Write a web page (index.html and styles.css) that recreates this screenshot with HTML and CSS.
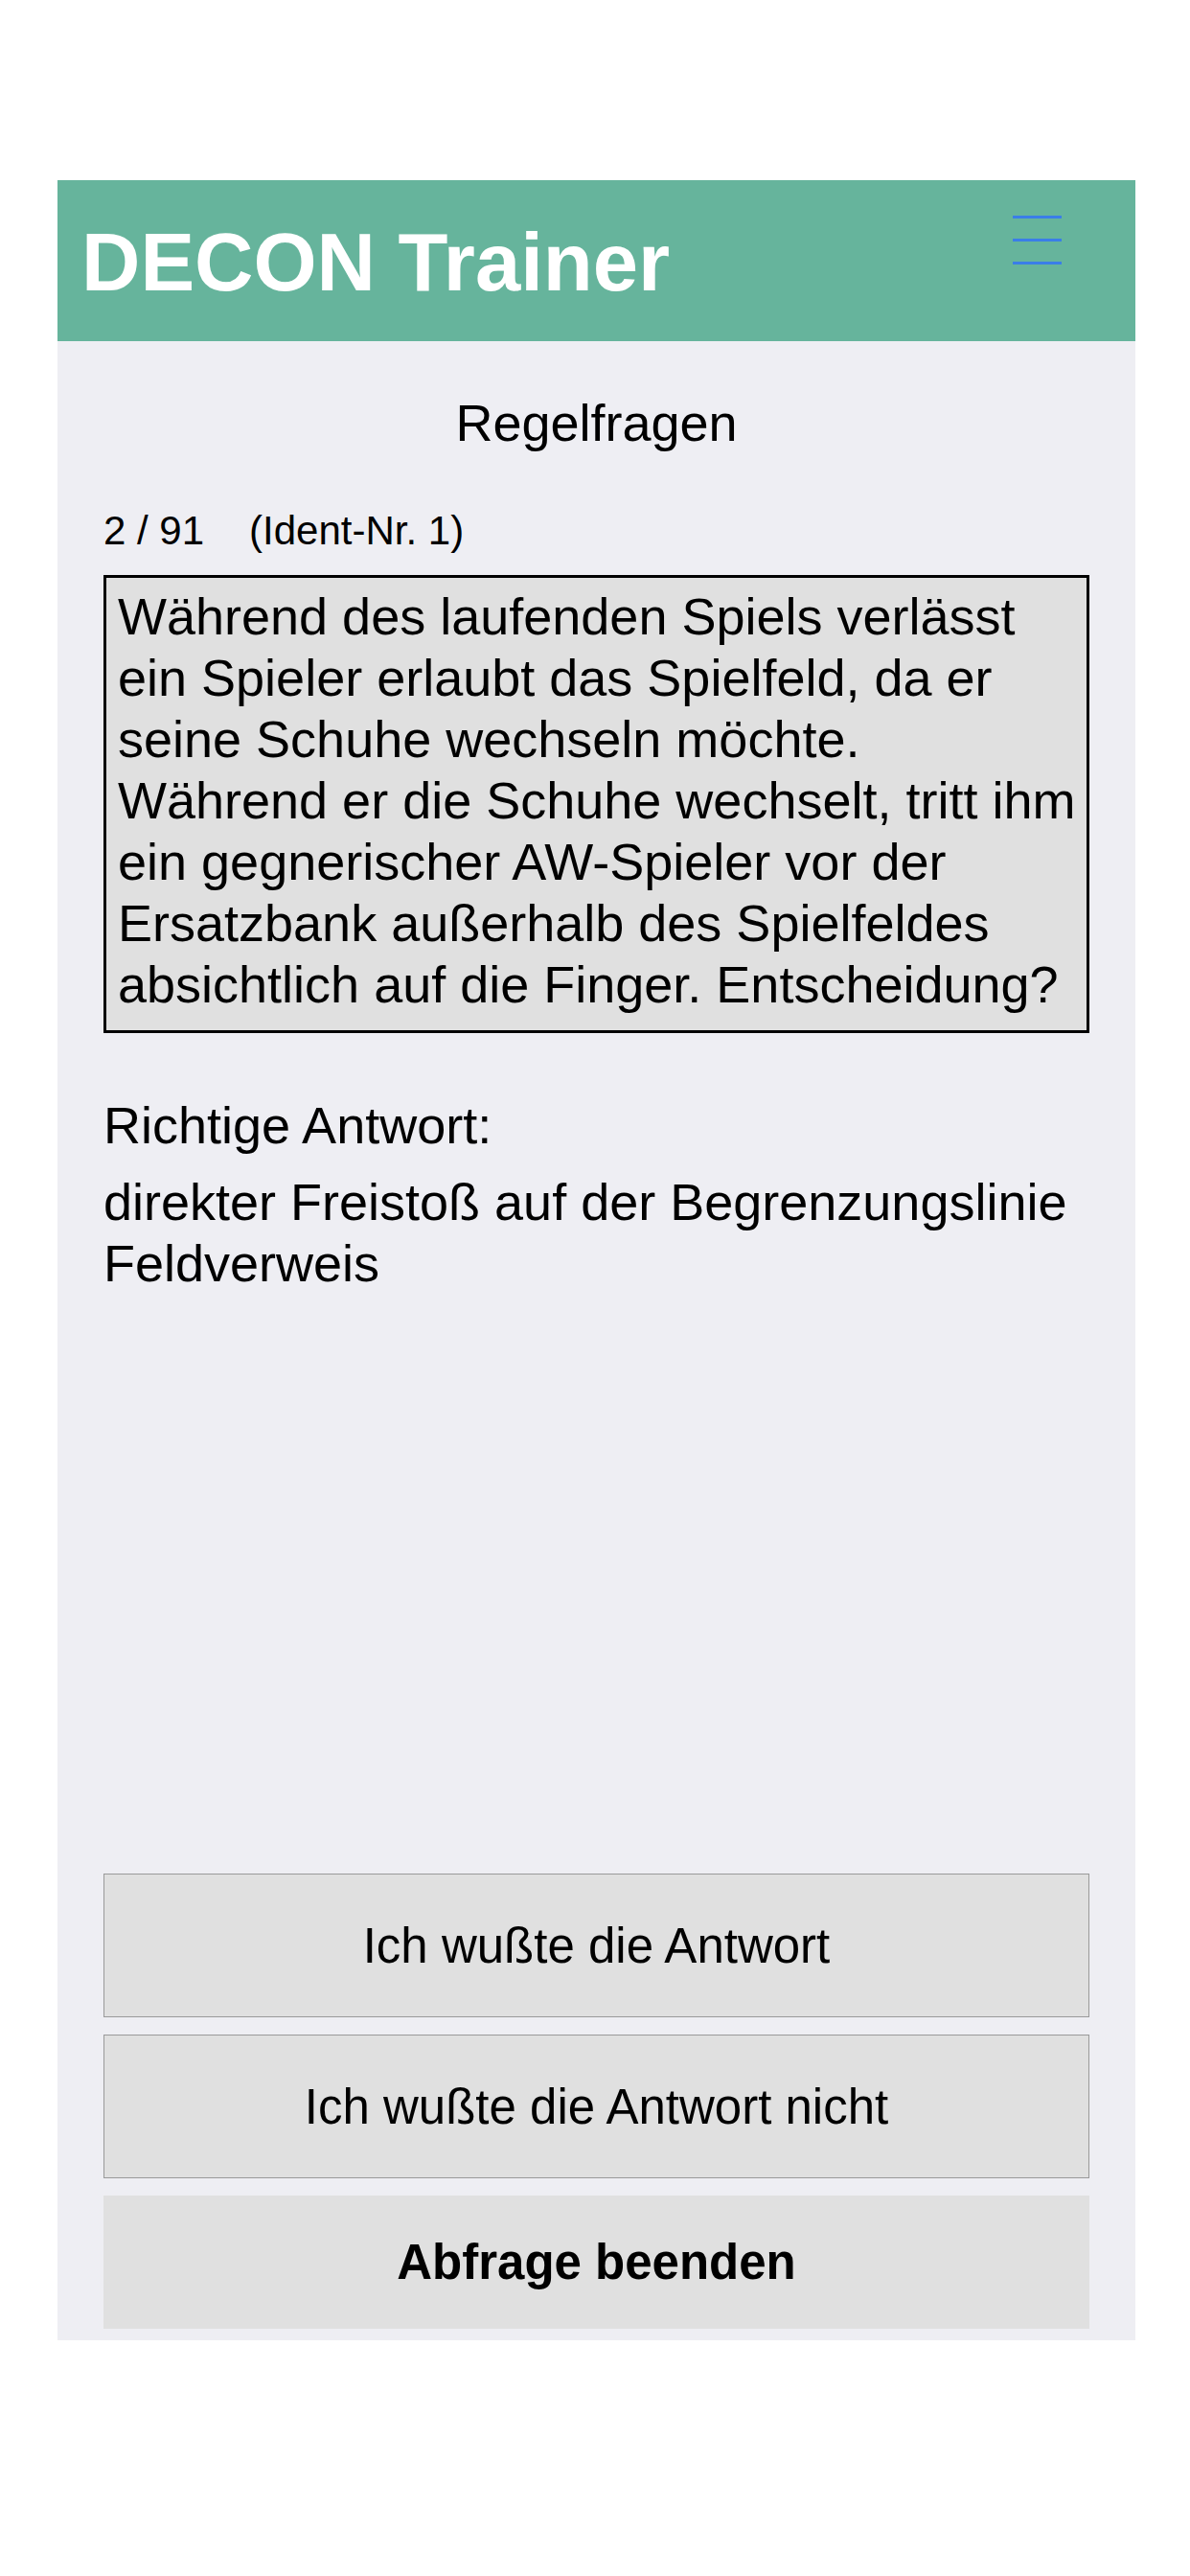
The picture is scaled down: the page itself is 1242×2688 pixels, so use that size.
FILE: index.html
```html
<!DOCTYPE html>
<html lang="de">
<head>
    <meta charset="UTF-8">
    <meta name="viewport" content="width=device-width, initial-scale=1.0">
    <title>DECON Trainer</title>
    <link rel="stylesheet" href="styles.css">
</head>
<body>

    <div class="app">
        <header class="topbar">
            <h1>DECON Trainer</h1>
            <button class="menu-btn" aria-label="Menü">
                <span></span>
                <span></span>
                <span></span>
            </button>
        </header>

        <main class="content">
            <h2 class="page-title">Regelfragen</h2>

            <div class="meta">
                <span id="counter">2 / 91</span>
                <span id="ident">(Ident-Nr. 1)</span>
            </div>

            <div class="question" id="question">Während des laufenden Spiels verlässt ein Spieler erlaubt das Spielfeld, da er seine Schuhe wechseln möchte. Während er die Schuhe wechselt, tritt ihm ein gegnerischer AW-Spieler vor der Ersatzbank außerhalb des Spielfeldes absichtlich auf die Finger. Entscheidung?</div>

            <div class="answer-label">Richtige Antwort:</div>
            <div class="answer" id="answer">
                direkter Freistoß auf der Begrenzungslinie<br>
                Feldverweis
            </div>

            <div class="actions">
                <button class="action-btn" id="known-btn">Ich wußte die Antwort</button>
                <button class="action-btn" id="unknown-btn">Ich wußte die Antwort nicht</button>
                <button class="action-btn end-btn" id="end-btn">Abfrage beenden</button>
            </div>
        </main>
    </div>

</body>
</html>
```

FILE: styles.css
```css
* {
    margin: 0;
    padding: 0;
    box-sizing: border-box;
    font-family: 'Liberation Sans', Arial, sans-serif;
}

body {
    background-color: #fff;
    color: #000;
}

.app {
    width: 1125px;
    margin: 188px 0 0 60px;
}

.topbar {
    height: 168px;
    background-color: #66b49c;
    display: flex;
    justify-content: space-between;
    align-items: flex-start;
    padding: 0 77px 0 25px;
}

.topbar h1 {
    margin-top: 38px;
    color: #fff;
    font-size: 85px;
    font-weight: 700;
    line-height: 96px;
}

.menu-btn {
    margin-top: 37px;
    width: 51px;
    display: flex;
    flex-direction: column;
    gap: 21px;
    background: none;
    border: none;
    cursor: pointer;
}

.menu-btn span {
    display: block;
    height: 3px;
    background-color: #3a7ee8;
}

.content {
    height: 2086px;
    background-color: #eeeef3;
    padding: 0 48px 12px;
    display: flex;
    flex-direction: column;
}

.page-title {
    margin-top: 53px;
    font-size: 54px;
    font-weight: 400;
    line-height: 64px;
    text-align: center;
}

.meta {
    margin-top: 56px;
    display: flex;
    gap: 47px;
    font-size: 42px;
    line-height: 50px;
}

.question {
    margin-top: 21px;
    background-color: #e0e0e0;
    border: 3px solid #000;
    padding: 8px 4px 16px 12px;
    font-size: 54px;
    line-height: 64px;
}

.answer-label {
    margin-top: 64px;
    font-size: 54px;
    line-height: 64px;
}

.answer {
    margin-top: 16px;
    font-size: 54px;
    line-height: 64px;
}

.actions {
    margin-top: auto;
    display: flex;
    flex-direction: column;
    gap: 18px;
}

.action-btn {
    height: 150px;
    background-color: #e0e0e0;
    border: 1px solid #9a9a9a;
    color: #000;
    font-size: 51px;
    cursor: pointer;
}

.end-btn {
    height: 139px;
    border: none;
    font-weight: 700;
}
```
